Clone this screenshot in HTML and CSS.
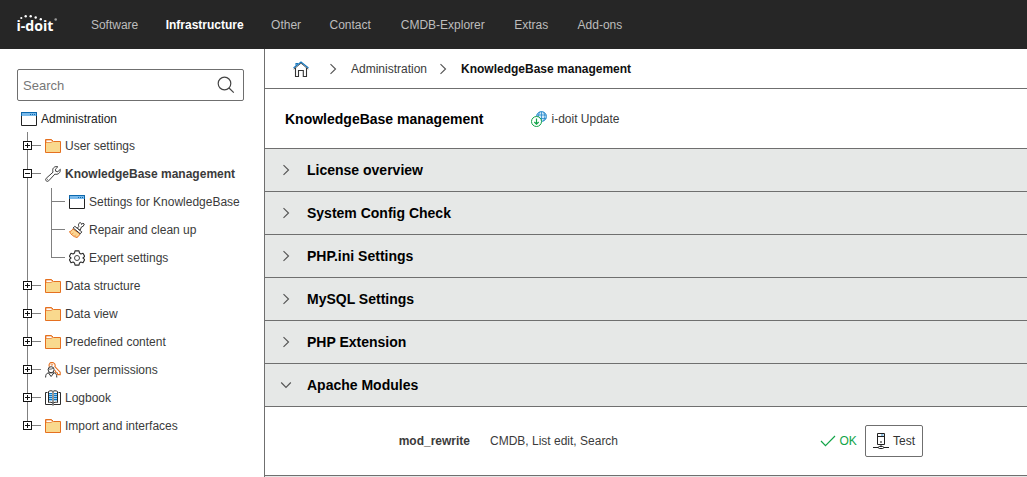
FILE: index.html
```html
<!DOCTYPE html>
<html lang="en">
<head>
<meta charset="utf-8">
<title>KnowledgeBase management</title>
<link rel="stylesheet" href="styles.css">
</head>
<body>
<svg class="defs" aria-hidden="true">
  <symbol id="window" viewBox="0 0 16 16"><path fill="#fff" stroke="#222" d="M.5 1.500h15v13H.5z"/><path fill="#79b9ea" d="M1 1h14v4H1z"/><path fill="none" stroke="#0c69b0" d="M.5 5V1.500H15.500V5"/><path stroke="#0c69b0" stroke-dasharray="1 1" d="M9 3.500h6"/></symbol>
  <symbol id="folder" viewBox="0 0 16 16"><path fill="#f9d98e" stroke="#e57020" d="M.5 14.500V1.500H6.500L8.500 3.500H15.500V14.500z"/><path fill="#fff" stroke="#e57020" stroke-width=".7" d="M1 4.500V2h5.300l1.200 1.700L6 4.500z"/></symbol>
  <symbol id="wrench" viewBox="0 0 16 16"><path fill="#fff" stroke="#333" stroke-width=".95" stroke-linejoin="round" d="M12.800.8C10.300-.1 7.600 1.600 7.700 4.300L8 6.200 1.200 12.300C-.5 14 2 16.500 3.700 14.800L9.900 8.100C12.600 9 15.700 7 15.300 3.300L12.800 5.700 10.700 5.200 10.400 3.200z"/><path stroke="#333" stroke-width=".8" d="M2.200 13.700l.8-.8"/></symbol>
  <symbol id="brush" viewBox="0 0 16 16"><path fill="#fbd795" stroke="#e57020" d="M3.800 6.800C3.300 8.300 2 9.300.5 9.600c1.300 2.900 4 5.200 7.500 5.900 1.300-.8 2.400-2.200 2.800-3.700z"/><path stroke="#e57020" stroke-width=".6" d="M3 12l1.500-1M5.500 14l1.300-1.300"/><path fill="#fff" stroke="#333" stroke-linejoin="round" d="M4.200 6L5.800 4.300l7 5.600-1.500 1.900z"/><path fill="#fff" stroke="#333" stroke-linejoin="round" d="M8.300 6.200l1.500-1.700c-.7-1.700-.2-3.200.9-3.700 1-.4 1.800.2 1.900 1.700l1.300-1.300 1.400.9-1.100 2.200-1.800.7-1.300 3.200z"/></symbol>
  <symbol id="gear" viewBox="0 0 16 16"><path fill="#fff" stroke="#2c2c2c" stroke-width="1.100" stroke-linejoin="round" d="M6 .9h4l.5 2.200 1.400.8 2.100-.7 1.700 3.200L14 8l1.700 1.600-1.700 3.200-2.100-.7-1.400.8-.5 2.200H6l-.5-2.200-1.400-.8-2.100.7L.3 9.600 2 8 .3 6.400 2 3.200l2.100.7 1.400-.8z"/><circle cx="8" cy="8" r="2.500" fill="none" stroke="#444"/></symbol>
  <symbol id="userkey" viewBox="0 0 16 16"><path fill="none" stroke="#e57020" stroke-width="1.100" d="M4.500 4.800C3 2.100 6-.8 8.600.9c1.500 1 1.900 2.400 1.300 3.700l5.300 5.500v2.500h-2.500l-.3-1.700-1.600-.3-.2-1.500-1.200-.5"/><circle cx="6.900" cy="2.600" r=".8" fill="#fff" stroke="#e57020" stroke-width=".7"/><path fill="#fff" stroke="#333" d="M.6 15.500c0-3 1-4.200 2.700-4.700h6c1.700.5 2.500 1.700 2.500 4.700M3.500 11l2.600 3.500L8.800 11"/><circle cx="6.100" cy="7.700" r="3" fill="#fff" stroke="#333"/><path fill="none" stroke="#333" stroke-width=".8" d="M3.400 6.900c2 .5 3.600.2 4.500-.6"/></symbol>
  <symbol id="book" viewBox="0 0 16 16"><path fill="#fff" stroke="#2c2c2c" d="M3.500 1.500c1.500-1 3.500-1 4.500 0 1-1 3-1 4.500 0v11c-1.500-.5-3.500-.5-4.500 1-1-1.500-3-1.500-4.500-1zM8 2v11.500"/><path fill="none" stroke="#2c2c2c" d="M2.500 2.500h-2v12H7l1 .7 1-.7h6.500v-12h-2"/><path fill="#9bd0f3" d="M4 3h3v8H4zM9 3h3v8H9z"/><path fill="#0878c9" d="M4 3h3v1H4zM4 5h3v1H4zM4 7h3v1H4zM4 9h3v1H4zM9 3h3v1H9zM9 5h3v1H9zM9 7h3v1H9zM9 9h3v1H9z"/></symbol>
  <symbol id="home" viewBox="0 0 16 16"><path fill="#fff" stroke="#333" stroke-width="1.100" d="M2.500 7v8.500h3V9.500h4.800v6h3.200V7"/><path fill="none" stroke="#444" stroke-width=".9" d="M.8 8.200L8 2.200l7.200 6"/><path fill="none" stroke="#1676bd" stroke-width="1.100" d="M.5 7L8 1 15.500 7M3 5V2.500h2"/></symbol>
  <symbol id="update" viewBox="0 0 16 16"><circle cx="10.500" cy="5.500" r="4.900" fill="#d3eafa" stroke="#2588ca"/><path fill="none" stroke="#2588ca" stroke-width=".8" d="M5.700 4h9.600M6 7.500h9.200M10.500.6v10M8.500 10c-1.800-3.500-1-7 .3-9M12.500 1c1.800 3 1.700 6-.1 9"/><circle cx="5.500" cy="10.500" r="5" fill="#fff" stroke="#12a448"/><path fill="none" stroke="#12a448" stroke-width="1.200" d="M5.500 7.500v5.700M3.300 11l2.200 2.200L7.700 11"/></symbol>
  <symbol id="right" viewBox="0 0 10 12"><path fill="none" stroke="#555" stroke-width="1.150" d="M2.500 1.200L7.500 6l-5 4.800"/></symbol>
  <symbol id="down" viewBox="0 0 12 10"><path fill="none" stroke="#555" stroke-width="1.150" d="M1.200 2.500L6 7.500l4.800-5"/></symbol>
  <symbol id="server" viewBox="0 0 16 16"><path fill="#fff" stroke="#222" d="M4.500.5h7v11h-7zM4.500 3.500h7M8 12v2M0 14.500h5.500M10.500 14.500H16"/><path stroke="#2588ca" d="M8 2h2.500"/><path fill="#888" d="M7 8h2v2H7z"/><rect x="5.500" y="13.500" width="5" height="2" rx=".8" fill="#fff" stroke="#222"/></symbol>
</svg>

<header class="topbar">
  <svg class="logo" width="44" height="22" viewBox="0 0 44 22">
    <text class="logo-text" x="-.5" y="18" textLength="37" lengthAdjust="spacingAndGlyphs">i-doit</text>
    <g fill="#fff"><circle cx="4.300" cy="5" r="1.100"/><circle cx="8.700" cy="3.300" r="1.200"/><circle cx="13.700" cy="3.200" r="1.200"/><circle cx="18.700" cy="4.500" r="1.200"/><circle cx="23.800" cy="6.300" r="1.200"/><circle cx="38.700" cy="6.500" r="1.300" opacity=".55"/></g>
  </svg>
  <nav class="menu"><a>Software</a><a class="active">Infrastructure</a><a>Other</a><a>Contact</a><a>CMDB-Explorer</a><a>Extras</a><a>Add-ons</a></nav>
</header>

<div class="layout">
  <aside class="sidebar">
    <div class="search"><span>Search</span>
      <svg width="18" height="18" viewBox="0 0 18 18"><circle cx="7.500" cy="7.500" r="6.300" fill="none" stroke="#444" stroke-width="1.200"/><path stroke="#444" stroke-width="1.200" d="M12 12l4.800 4.600"/></svg>
    </div>
    <div class="root"><svg class="icon"><use href="#window"/></svg>Administration</div>
    <ul class="tree">
      <li><div class="node"><i class="box plus"></i><svg class="icon"><use href="#folder"/></svg>User settings</div></li>
      <li><div class="node current"><i class="box"></i><svg class="icon"><use href="#wrench"/></svg>KnowledgeBase management</div>
        <ul class="children">
          <li class="node"><svg class="icon"><use href="#window"/></svg>Settings for KnowledgeBase</li>
          <li class="node"><svg class="icon"><use href="#brush"/></svg>Repair and clean up</li>
          <li class="node"><svg class="icon"><use href="#gear"/></svg>Expert settings</li>
        </ul>
      </li>
      <li><div class="node"><i class="box plus"></i><svg class="icon"><use href="#folder"/></svg>Data structure</div></li>
      <li><div class="node"><i class="box plus"></i><svg class="icon"><use href="#folder"/></svg>Data view</div></li>
      <li><div class="node"><i class="box plus"></i><svg class="icon"><use href="#folder"/></svg>Predefined content</div></li>
      <li><div class="node"><i class="box plus"></i><svg class="icon"><use href="#userkey"/></svg>User permissions</div></li>
      <li><div class="node"><i class="box plus"></i><svg class="icon"><use href="#book"/></svg>Logbook</div></li>
      <li><div class="node"><i class="box plus"></i><svg class="icon"><use href="#folder"/></svg>Import and interfaces</div></li>
    </ul>
  </aside>

  <main class="content">
    <div class="crumbs">
      <svg class="icon"><use href="#home"/></svg>
      <svg class="chev first"><use href="#right"/></svg><span>Administration</span>
      <svg class="chev second"><use href="#right"/></svg><b>KnowledgeBase management</b>
    </div>
    <div class="heading"><h1>KnowledgeBase management</h1><a class="update"><svg class="icon"><use href="#update"/></svg>i-doit Update</a></div>
    <section class="panels">
      <h2><svg class="chev"><use href="#right"/></svg>License overview</h2>
      <h2><svg class="chev"><use href="#right"/></svg>System Config Check</h2>
      <h2><svg class="chev"><use href="#right"/></svg>PHP.ini Settings</h2>
      <h2><svg class="chev"><use href="#right"/></svg>MySQL Settings</h2>
      <h2><svg class="chev"><use href="#right"/></svg>PHP Extension</h2>
      <h2><svg class="chev open"><use href="#down"/></svg>Apache Modules</h2>
      <div class="module">
        <b>mod_rewrite</b><span class="usage">CMDB, List edit, Search</span>
        <span class="ok"><svg width="16" height="12" viewBox="0 0 16 12"><path fill="none" stroke="#12a448" stroke-width="1.200" d="M1 6l4.500 4.700L15 1"/></svg>OK</span>
        <button class="test"><svg class="icon"><use href="#server"/></svg>Test</button>
      </div>
      <div class="next"></div>
    </section>
  </main>
</div>
</body>
</html>
```
FILE: styles.css
```css
* { box-sizing: border-box; }
body { margin: 0; background: #fff; color: #3b3b3b; font: 12px/16px "Liberation Sans", Arial, sans-serif; }
.defs { display: none; }
svg { flex: none; display: block; }
.icon { width: 16px; height: 16px; }
.chev { width: 10px; height: 12px; }
.chev.open { width: 12px; height: 10px; }

.topbar { display: flex; align-items: center; height: 49px; padding-left: 17px; background: #262626; }
.logo { margin-bottom: 1px; overflow: visible; }
.logo-text { fill: #fff; font: bold 14px "Open Sans", sans-serif; }
.menu { display: flex; gap: 27.400px; margin-left: 29.900px; color: #bdbdbd; }
.menu a { white-space: nowrap; }
.menu a:nth-child(4) { margin: 0 2.500px 0 1px; }
.menu a:nth-child(5) { margin-right: 2px; }
.menu a:nth-child(6) { margin-right: 2px; }
.menu .active { color: #fff; font-weight: bold; }

.layout { display: flex; height: 428px; }
.sidebar { width: 265px; border-right: 1px solid #6f6f6f; padding: 20px 20px 0 17px; }
.search { display: flex; align-items: center; justify-content: space-between; height: 32px; padding: 0 8px 0 5px; border: 1px solid #6f6f6f; border-radius: 2px; color: #777; font-size: 13px; }
.search span { padding-top: 2px; }
.root { display: flex; align-items: center; gap: 4px; height: 31px; margin-left: 4px; padding-top: 5px; color: #222; }
.tree, .children { margin: 0; padding: 0; list-style: none; }
.tree { margin-left: 6px; background: linear-gradient(#808080, #808080) 4px 0 / 1px 294px no-repeat; }
.node { display: flex; align-items: center; gap: 4px; height: 28px; white-space: nowrap; }
.current { font-weight: bold; }
.box { position: relative; width: 9px; height: 9px; margin: 0 9px 1px 0; border: 1px solid #111; background: linear-gradient(#111, #111) center / 5px 1px no-repeat #fff; }
.box::after { content: ""; position: absolute; left: 8px; top: 3px; width: 9px; height: 1px; background: #808080; }
.plus { background: linear-gradient(#111, #111) center / 5px 1px no-repeat, linear-gradient(#111, #111) center / 1px 5px no-repeat, #fff; }
.children { margin-left: 28px; background: linear-gradient(#808080, #808080) 0 0 / 1px 70px no-repeat; }
.children .node::before { content: ""; width: 14px; height: 1px; margin-bottom: 1px; background: #808080; }

.content { flex: 1; min-width: 0; }
.crumbs { display: flex; align-items: center; height: 40px; padding-left: 28px; border-bottom: 1px solid #6f6f6f; }
.crumbs .icon { margin-top: 1px; }
.crumbs b { color: #111; }
.crumbs .first { margin: 0 13px 0 19px; }
.crumbs .second { margin: 0 13px 0 11px; }
.heading { display: flex; align-items: center; height: 60px; padding-left: 20px; border-bottom: 1px solid #6f6f6f; }
.heading h1 { width: 246px; margin: 0; color: #000; font-size: 14px; }
.update { display: flex; align-items: center; gap: 4.500px; }
.panels h2 { display: flex; align-items: center; gap: 16px; height: 43px; margin: 0; padding-left: 16px; border-bottom: 1px solid #6f6f6f; background: #e6e8e7; color: #000; font-size: 14px; }
.panels .open { margin-left: -1px; margin-right: -1px; }
.module { display: flex; align-items: center; height: 69px; border-bottom: 1px solid #6f6f6f; }
.module > b { width: 205px; text-align: right; }
.usage { width: 331px; padding-left: 20px; }
.ok { display: flex; align-items: center; gap: 3.500px; width: 64px; padding-left: 19px; color: #12a448; }
.test { display: flex; align-items: center; gap: 4px; width: 58px; height: 32px; padding: 0 7px; border: 1px solid #6f6f6f; border-radius: 2px; background: #fff; color: #333; font: inherit; }
.next { height: 1px; background: #e6e8e7; }
```
